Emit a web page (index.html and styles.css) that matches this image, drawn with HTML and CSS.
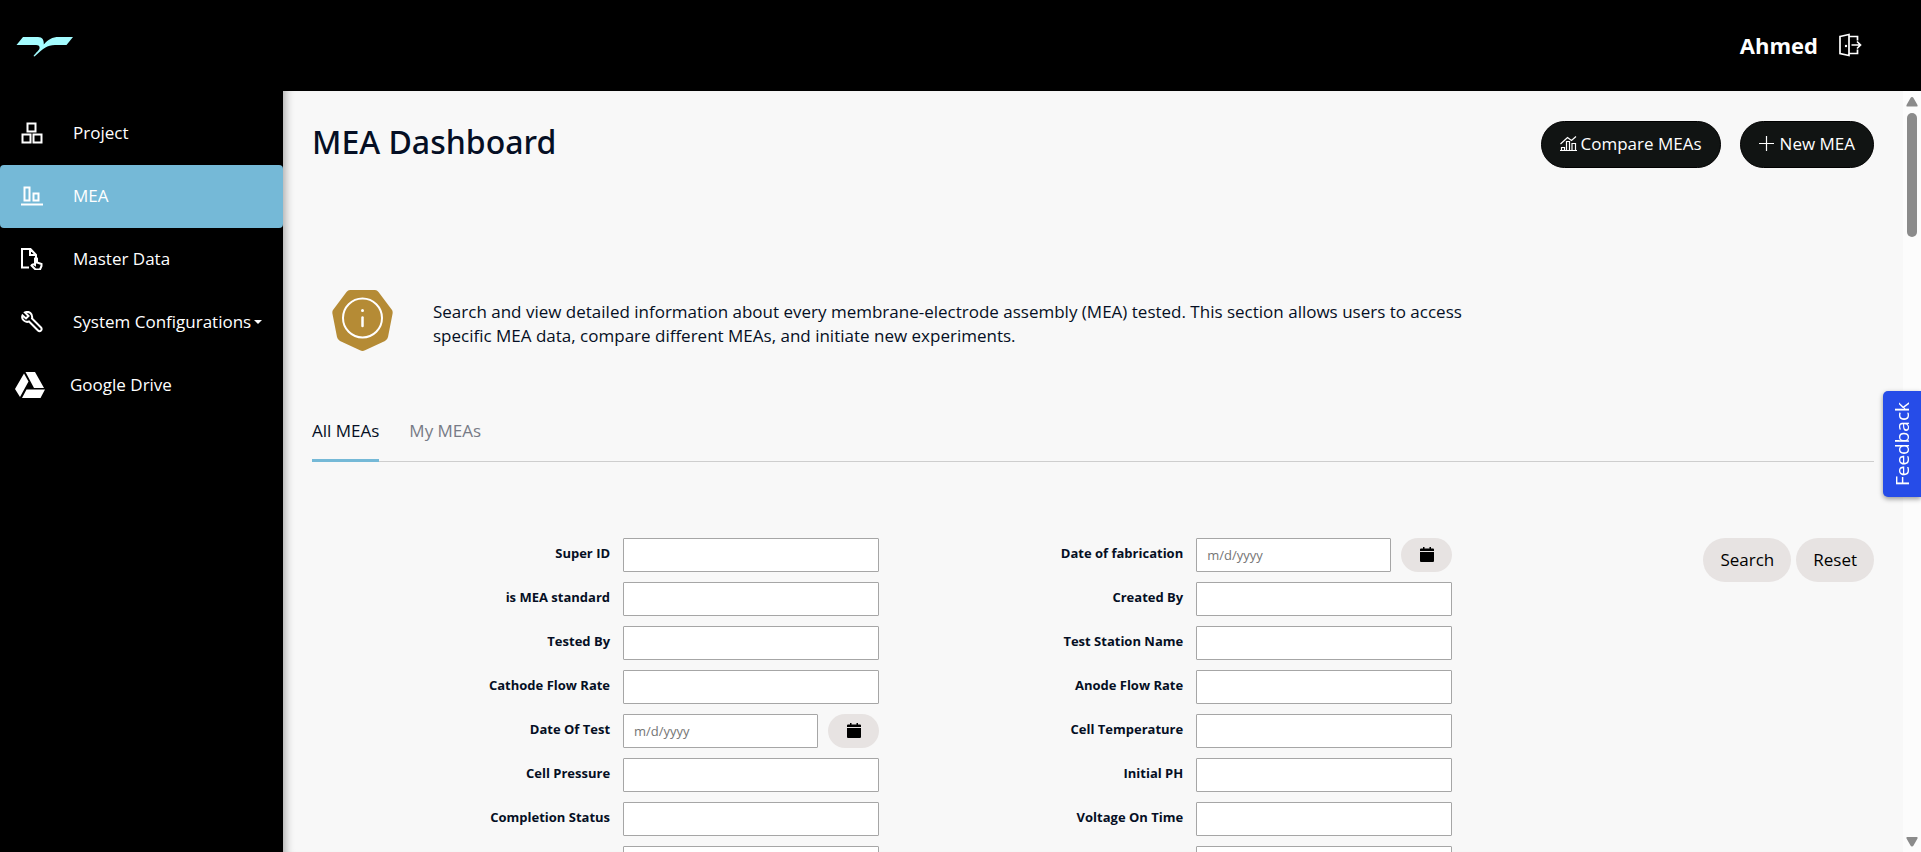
FILE: index.html
```html
<!DOCTYPE html>
<html lang="en">
<head>
<meta charset="utf-8">
<meta name="viewport" content="width=device-width, initial-scale=1">
<title>MEA Dashboard</title>
<link rel="stylesheet" href="styles.css">
</head>
<body>
<div class="app">
  <header class="topbar">
    <a class="logo" href="#" aria-label="Home">
      <svg width="58" height="22" viewBox="0 0 58 22"><path fill="#a4fcff" d="M7 1H22C26.500 1 28 4 27.800 8.500C32 3.500 36 1 43 1H57L50.500 9H39C31 9 27.500 12.500 18.500 20.500L17.500 20C20 16.500 23 14.500 23.500 12.500C24 10 22.500 9 20 9H.5Z"/></svg>
    </a>
    <div class="account">
      <span class="account-name">Ahmed</span>
      <button class="logout" type="button" aria-label="Log out">
        <svg width="24" height="24" viewBox="0 0 24 24" fill="none" stroke="#fff" stroke-width="1.700"><path d="M2 3.500L11 1.500V22.500L2 20.500ZM11 3.500H19.500V7.500M11 20.500H19.500V16.500M13.500 12H22.500M19 8.500L22.500 12L19 15.500"/><circle cx="8" cy="13" r="1.200" fill="#fff" stroke="none"/></svg>
      </button>
    </div>
  </header>
  <div class="body">
    <nav class="sidebar">
      <a class="nav-item" href="#"><svg class="nav-icon" viewBox="0 0 22 22"><path d="M6.500 1.500h8v8h-8zM1.500 12.500h8v8h-8zM12.500 12.500h8v8h-8z"/></svg>Project</a>
      <a class="nav-item nav-item-active" href="#"><svg class="nav-icon" viewBox="0 0 22 22"><path d="M3.500 2.500h5v13h-5zM12.500 8.500h5v7h-5z"/><path stroke-width="2" d="M0 19.500h22"/></svg>MEA</a>
      <a class="nav-item" href="#"><svg class="nav-icon" viewBox="0 0 22 22"><path d="M8 19.500H1V1H9.500L15 7V9M9 1V7H15"/><path d="M14 17V10.500Q15 9 16 10.500V14.500L20.500 16V18L19 21.500H14.500L10.500 17.500Q11.500 15.500 14 17Z"/></svg>Master Data</a>
      <a class="nav-item" href="#"><svg class="nav-icon" viewBox="0 0 22 22"><path d="M4 1.500L7.500 5L5 7.500L1.500 4.500C0 8 4 12 8 10.500L17 19.500C19 21.500 22 18.500 20 16.500L11 7.500C12 3 8 -.5 4 1.500Z"/></svg><span class="nav-text">System Configurations<span class="caret"></span></span></a>
      <a class="nav-item nav-item-drive" href="#"><svg class="drive-icon" viewBox="0 0 30 26"><path d="M10.500 0H20L29 16H19ZM9 1.500L13.500 9.500L5 25L0 17ZM11.500 17.500H30L25.500 26H7Z"/></svg>Google Drive</a>
    </nav>
    <main class="content">
      <div class="title-row">
        <h1 class="title">MEA Dashboard</h1>
        <div class="actions">
          <button class="btn btn-dark" type="button"><svg width="17" height="17" viewBox="0 0 17 17" fill="none" stroke="#fff" stroke-width="1.200"><path d="M.5 9L7.500 2.500L11.500 5.500L16 1.500M1.500 15.500V12.500h3v3M6.500 15.500V6.500h3v9M12 15.500V8.500h3.500v7M0 15.500H17"/></svg>Compare MEAs</button>
          <button class="btn btn-dark btn-new" type="button"><svg width="15" height="15" viewBox="0 0 15 15" stroke="#fff" stroke-width="1.200"><path d="M7.500 0V15M0 7.500H15"/></svg>New MEA</button>
        </div>
      </div>
      <section class="info">
        <svg class="info-icon" viewBox="0 0 61 61"><path fill="#b58b35" d="M18 0H43Q45 0 46.500 2L60 20Q61 21.500 60.500 24L56 47Q55.500 49.500 53 51L33 60.300Q30.500 61.500 28 60.300L8 51Q5.500 49.500 5 47L.5 24Q0 21.500 1 20L14.500 2Q16 0 18 0Z"/><circle cx="30.500" cy="28" r="19.500" fill="none" stroke="#fff" stroke-width="2"/><path stroke="#fff" stroke-width="2.500" stroke-linecap="round" d="M30.500 27.500V36"/><circle cx="30.500" cy="20.500" r="1.500" fill="#fff"/></svg>
        <p class="info-text">Search and view detailed information about every membrane-electrode assembly (MEA) tested. This section allows users to access specific MEA data, compare different MEAs, and initiate new experiments.</p>
      </section>
      <div class="tabs" role="tablist">
        <button class="tab tab-active" type="button" role="tab" aria-selected="true">All MEAs</button>
        <button class="tab" type="button" role="tab" aria-selected="false">My MEAs</button>
      </div>
      <form class="filters">
        <div class="fields">
          <label class="label" for="f1">Super ID</label><input class="input" id="f1" type="text">
          <label class="label" for="f2">Date of fabrication</label>
          <div class="date"><input class="input" id="f2" type="text" placeholder="m/d/yyyy"><button class="pick" type="button" aria-label="Pick date of fabrication"><svg width="14" height="15" viewBox="0 0 14 15"><path d="M1 1.500H3V0H4.500V1.500H9.500V0H11V1.500H13Q14 1.500 14 2.500V4H0V2.500Q0 1.500 1 1.500ZM0 5H14V14Q14 15 13 15H1Q0 15 0 14Z"/></svg></button></div>
          <label class="label" for="f3">is MEA standard</label><input class="input" id="f3" type="text">
          <label class="label" for="f4">Created By</label><input class="input" id="f4" type="text">
          <label class="label" for="f5">Tested By</label><input class="input" id="f5" type="text">
          <label class="label" for="f6">Test Station Name</label><input class="input" id="f6" type="text">
          <label class="label" for="f7">Cathode Flow Rate</label><input class="input" id="f7" type="text">
          <label class="label" for="f8">Anode Flow Rate</label><input class="input" id="f8" type="text">
          <label class="label" for="f9">Date Of Test</label>
          <div class="date"><input class="input" id="f9" type="text" placeholder="m/d/yyyy"><button class="pick" type="button" aria-label="Pick date of test"><svg width="14" height="15" viewBox="0 0 14 15"><path d="M1 1.500H3V0H4.500V1.500H9.500V0H11V1.500H13Q14 1.500 14 2.500V4H0V2.500Q0 1.500 1 1.500ZM0 5H14V14Q14 15 13 15H1Q0 15 0 14Z"/></svg></button></div>
          <label class="label" for="f10">Cell Temperature</label><input class="input" id="f10" type="text">
          <label class="label" for="f11">Cell Pressure</label><input class="input" id="f11" type="text">
          <label class="label" for="f12">Initial PH</label><input class="input" id="f12" type="text">
          <label class="label" for="f13">Completion Status</label><input class="input" id="f13" type="text">
          <label class="label" for="f14">Voltage On Time</label><input class="input" id="f14" type="text">
          <span></span><input class="input" type="text" aria-label="Filter">
          <span></span><input class="input" type="text" aria-label="Filter">
        </div>
        <div class="form-actions">
          <button class="btn btn-light" type="button">Search</button>
          <button class="btn btn-light" type="button">Reset</button>
        </div>
      </form>
    </main>
    <div class="scrollbar" aria-hidden="true">
      <svg width="12" height="10" viewBox="0 0 12 10"><path fill="#8b8b8b" d="M6 0Q7 0 7.500 1L11.500 8Q12 9.500 11 9.500H1Q0 9.500 .5 8L4.500 1Q5 0 6 0Z"/></svg>
      <div class="thumb"></div>
      <svg width="12" height="10" viewBox="0 0 12 10"><path fill="#8b8b8b" d="M6 9.500Q5 9.500 4.500 8.500L.5 1.500Q0 0 1 0H11Q12 0 11.500 1.500L7.500 8.500Q7 9.500 6 9.500Z"/></svg>
    </div>
  </div>
</div>
<button class="feedback" type="button">Feedback</button>
</body>
</html>
```
FILE: styles.css
```css
* { box-sizing: border-box; }
body {
  margin: 0;
  font: 17px/24px "Open Sans", "Noto Sans", sans-serif;
  color: #050f24;
  background: #f8f8f8;
}
button, input { font: inherit; color: inherit; }
button { cursor: pointer; }
a { text-decoration: none; }
svg { display: block; flex: none; }

.app { display: flex; flex-direction: column; height: 100vh; overflow: hidden; }
.topbar {
  display: flex;
  flex: none;
  align-items: center;
  justify-content: space-between;
  height: 91px;
  padding: 0 59px 2px 16px;
  background: #000;
}
.logo { padding-top: 5px; }
.account { display: flex; align-items: center; gap: 20px; color: #fff; }
.account-name { font-size: 22px; font-weight: 700; }
.logout { padding: 0; border: 0; background: none; }

.body { display: flex; flex: 1; min-height: 0; }
.sidebar { flex: none; width: 283px; padding-top: 11px; background: #000; }
.nav-item {
  display: flex;
  align-items: center;
  gap: 30px;
  height: 63px;
  padding: 0 21px 2px;
  border-radius: 4px;
  color: #fff;
  white-space: nowrap;
}
.nav-item-active { background: #75b9d7; }
.nav-item-drive { gap: 25px; padding-left: 15px; }
.nav-icon { width: 22px; height: 22px; fill: none; stroke: #fff; stroke-width: 2; }
.drive-icon { width: 30px; height: 26px; fill: #fff; }
.nav-text { display: flex; align-items: center; gap: 3px; }
.caret { border: 4px solid transparent; border-top-color: #fff; border-bottom: 0; }

.content {
  flex: 1;
  min-width: 0;
  padding: 30px 29px 0;
  overflow: hidden;
  box-shadow: inset 10px 0 10px -8px rgba(0, 0, 0, .35);
}
.title-row { display: flex; justify-content: space-between; align-items: flex-start; }
.title { margin: 0; font-family: "Noto Sans", sans-serif; font-size: 32px; font-weight: 500; line-height: 42px; }
.actions { display: flex; gap: 19px; }
.btn {
  display: flex;
  align-items: center;
  justify-content: center;
  gap: 4px;
  padding: 0 18px;
  border: 0;
  border-radius: 24px;
}
.btn-dark { height: 47px; padding-bottom: 2px; border: 1px solid #000; background: #111413; color: #fff; }
.btn-new { gap: 6px; }
.btn-light { height: 44px; padding: 0 17px; background: #e7e3e2; color: #000; }

.info { display: flex; align-items: center; gap: 40px; padding: 122px 20px 0; }
.info-icon { width: 61px; height: 61px; }
.info-text { max-width: 1060px; margin: 6px 0 0; }

.tabs { display: flex; gap: 30px; margin-top: 63px; border-bottom: 1px solid #cecece; }
.tab {
  padding: 5px 0 16px;
  margin-bottom: -1px;
  border: 0;
  border-bottom: 3px solid transparent;
  background: none;
  color: #777b86;
}
.tab-active { border-color: #75b9d7; color: #050f24; }

.filters { display: flex; justify-content: space-between; padding-top: 76px; }
.fields {
  display: grid;
  flex: 0 0 73%;
  grid-template-columns: 298fr 256fr 291fr 256fr;
  gap: 10px 13px;
}
.label {
  padding-top: 3px;
  font-size: 13px;
  font-weight: 700;
  text-align: right;
}
.input {
  width: 100%;
  min-width: 0;
  height: 34px;
  padding: 0 10px;
  border: 1px solid #a6a6a6;
  border-radius: 1px;
  background: #fff;
  font-size: 13px;
}
.input::placeholder { color: #757575; }
.date { display: flex; gap: 10px; }
.pick {
  display: flex;
  flex: 0 0 51px;
  align-items: center;
  justify-content: center;
  height: 34px;
  padding: 0 0 2px;
  border: 0;
  border-radius: 17px;
  background: #e7e3e2;
}
.form-actions { display: flex; align-items: flex-start; gap: 5px; }

.scrollbar {
  display: flex;
  flex: none;
  flex-direction: column;
  align-items: center;
  width: 18px;
  padding: 6px 0 5px;
  background: #fcfcfc;
}
.thumb { width: 10px; height: 124px; margin: 6px 0 auto; border-radius: 5px; background: #8b8b8b; }

.feedback {
  position: fixed;
  top: 391px;
  right: 0;
  width: 38px;
  padding: 11px 0;
  border: 0;
  border-radius: 5px 0 0 5px;
  background: #264ce8;
  box-shadow: 0 2px 5px rgba(0, 0, 0, .4);
  color: #fff;
  font-size: 19px;
  line-height: 38px;
  writing-mode: sideways-lr;
}
```
